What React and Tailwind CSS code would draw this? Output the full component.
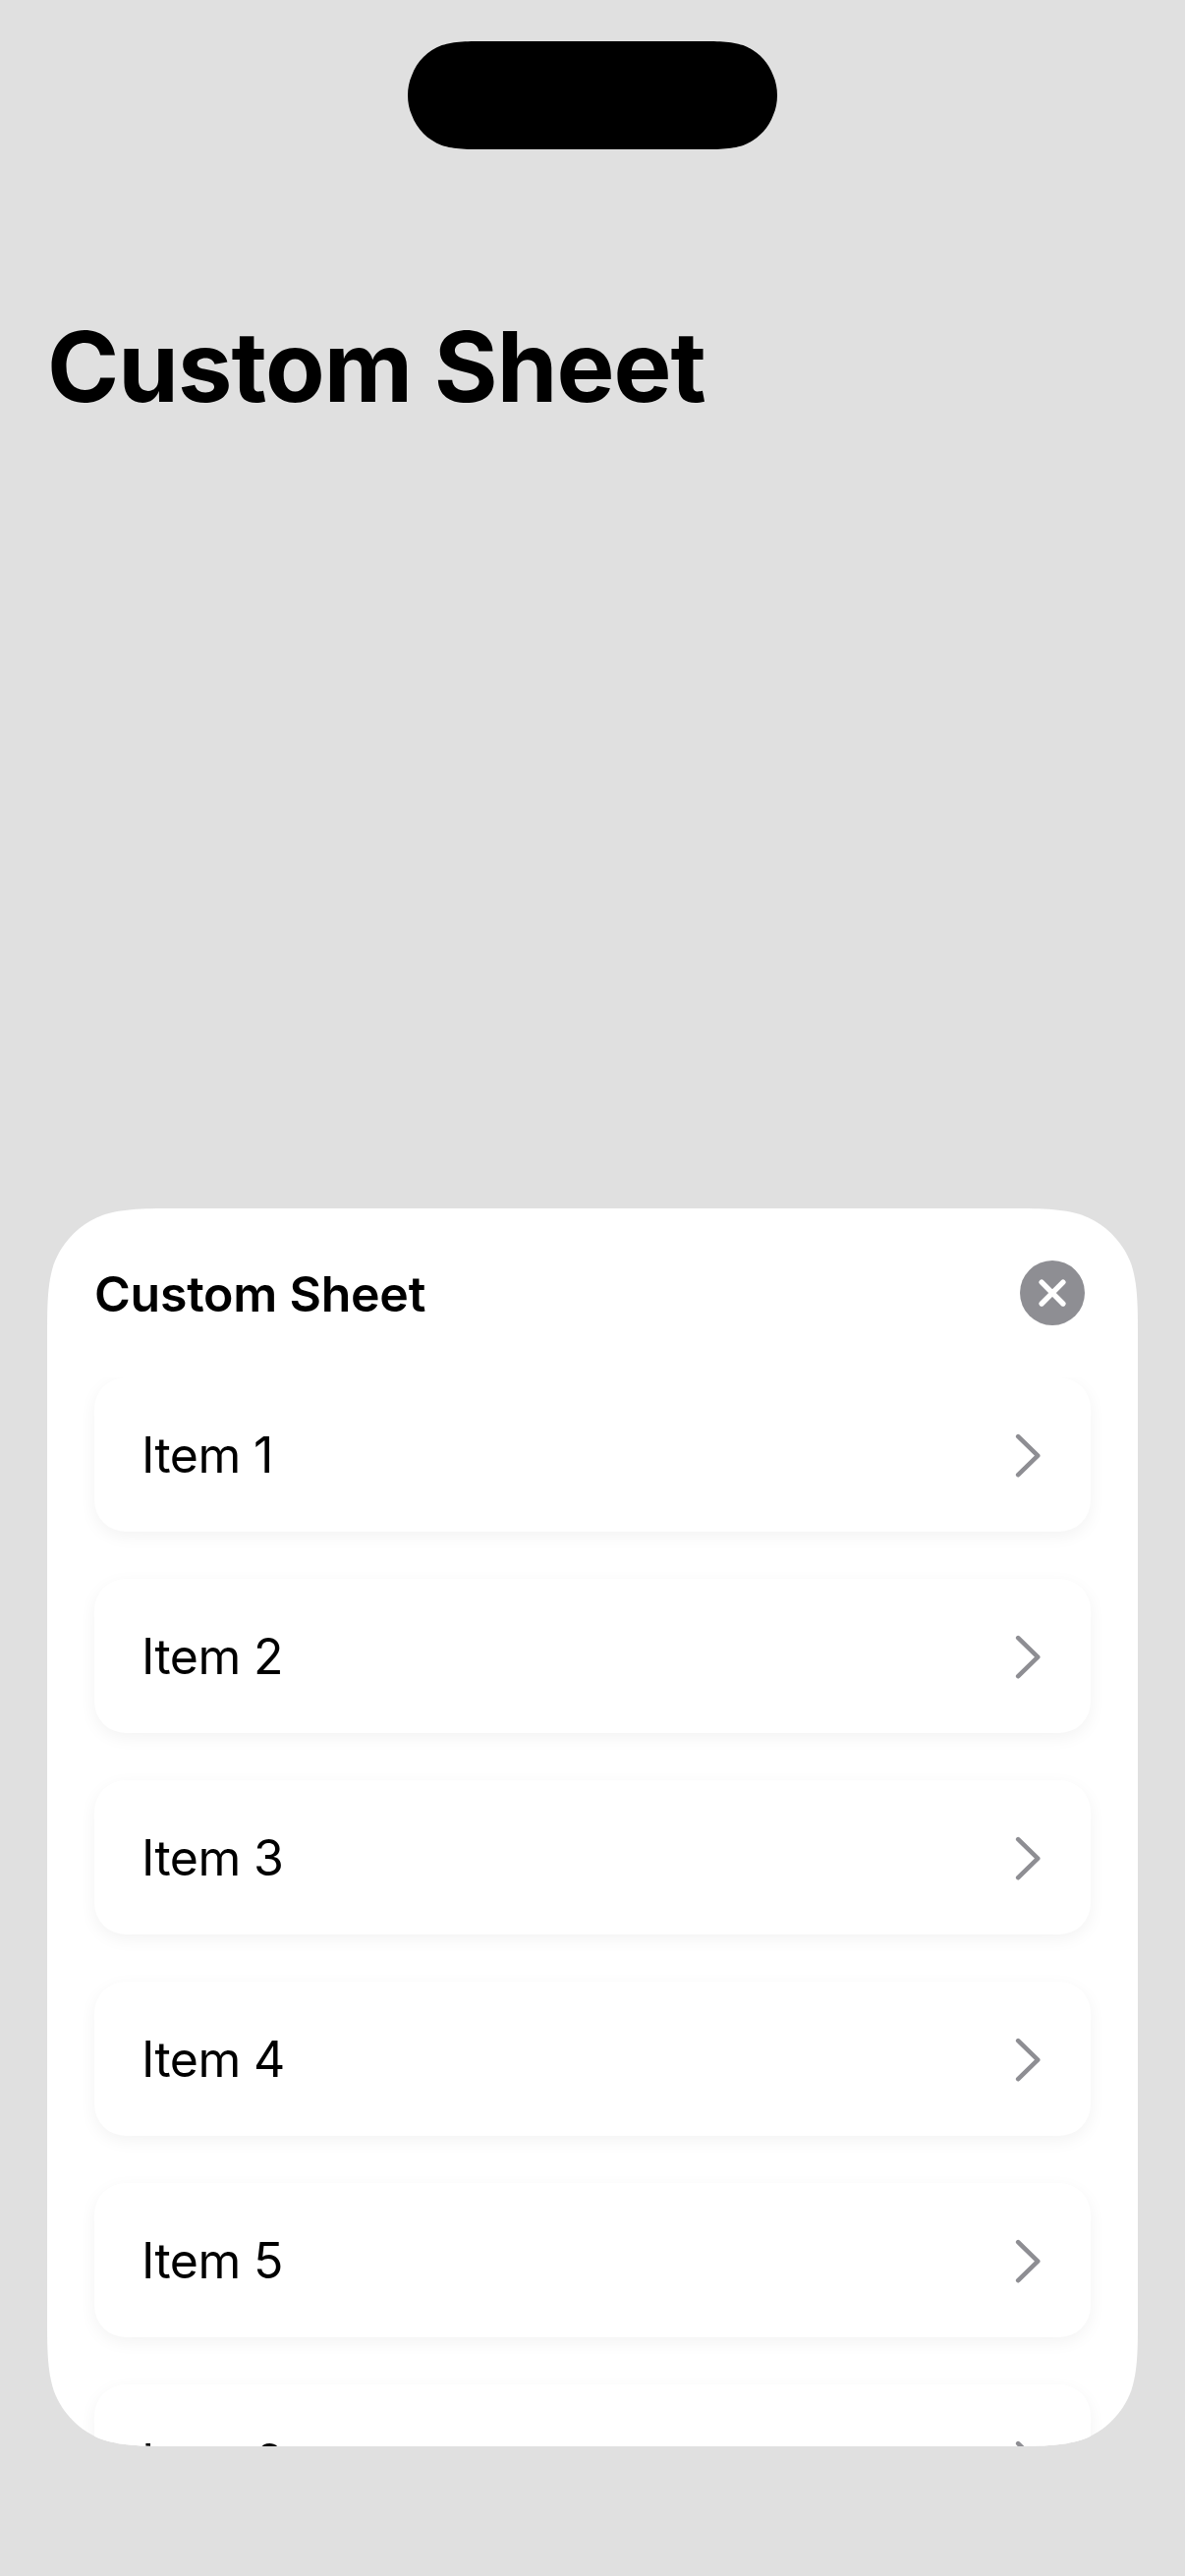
const items = [1, 2, 3, 4, 5, 6];

function CloseIcon() {
  return (
    <svg width="66" height="66" viewBox="0 0 66 66" fill="none">
      <circle cx="33" cy="33" r="33" fill="#8e8e93" />
      <path d="M22.1 22.2 L43.9 44 M43.9 22.2 L22.1 44" stroke="#fff" strokeWidth="5.4" strokeLinecap="round" />
    </svg>
  );
}

function Chevron() {
  return (
    <svg width="26" height="46" viewBox="0 0 26 46" fill="none">
      <path
        d="M3.2 4.2 L23.2 23.7 L3.2 43.2"
        stroke="#8e8e93"
        strokeWidth="4.6"
        strokeLinecap="round"
        strokeLinejoin="round"
      />
    </svg>
  );
}

function Row({ n }) {
  return (
    <li className="flex h-[157px] shrink-0 items-center justify-between rounded-[32px] bg-white pr-[51px] pl-12 shadow-[0_5px_17px_rgba(0,0,0,0.05)]">
      <span className="text-[50px] leading-[60px] tracking-[-0.6px]">Item {n}</span>
      <Chevron />
    </li>
  );
}

export default function App() {
  return (
    <div className="flex h-[2622px] w-[1206px] flex-col overflow-hidden bg-[#e0e0e0] font-['Inter',sans-serif] text-black">
      <div className="mt-[42px] h-[110px] w-[376px] shrink-0 self-center bg-black [clip-path:path('M0_55C0_48_1.3_41_4.1_34.7C9.3_20.5_20.5_9.3_34.7_4.1C47.8_0_59.9_0_84_0H292C316.1_0_328.2_0_341.3_4.1C355.5_9.3_366.7_20.5_371.9_34.7C374.7_41_376_48_376_55C376_62_374.7_69_371.9_75.3C366.7_89.5_355.5_100.7_341.3_105.9C328.2_110_316.1_110_292_110H84C59.9_110_47.8_110_34.7_105.9C20.5_100.7_9.3_89.5_4.1_75.3C1.3_69_0_62_0_55Z')]" />
      <h1 className="mt-[161px] ml-12 h-[120px] shrink-0 text-[99px] leading-[120px] font-bold tracking-[-0.9px] whitespace-nowrap">
        Custom Sheet
      </h1>
      <section className="mx-12 mt-[797px] flex h-[1260px] shrink-0 flex-col overflow-hidden bg-white [clip-path:path('M0_137.6C0_98_0_78.2_6.7_56.8C15.2_33.6_33.6_15.2_56.8_6.7C78.2_0_98_0_137.6_0H972.4C1012_0_1031.8_0_1053.2_6.7C1076.4_15.2_1094.8_33.6_1103.3_56.8C1110_78.2_1110_98_1110_137.6V1122.4C1110_1162_1110_1181.8_1103.3_1203.2C1094.8_1226.4_1076.4_1244.8_1053.2_1253.3C1031.8_1260_1012_1260_972.4_1260H137.6C98_1260_78.2_1260_56.8_1253.3C33.6_1244.8_15.2_1226.4_6.7_1203.2C0_1181.8_0_1162_0_1122.4Z')]">
        <header className="flex h-[172px] shrink-0 items-center justify-between pr-[54px] pl-12">
          <h2 className="pt-[2px] text-[50px] leading-[60px] font-semibold tracking-[-0.25px]">Custom Sheet</h2>
          <button aria-label="Close">
            <CloseIcon />
          </button>
        </header>
        <ul className="flex min-h-0 flex-1 flex-col gap-12 overflow-hidden px-12">
          {items.map((n) => (
            <Row key={n} n={n} />
          ))}
        </ul>
      </section>
    </div>
  );
}
